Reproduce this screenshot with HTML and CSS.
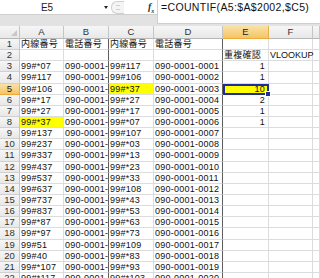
FILE: index.html
```html
<!DOCTYPE html>
<html lang="ja">
<head>
    <meta charset="UTF-8">
    <meta name="viewport" content="width=device-width, initial-scale=1.0">
    <title>重複確認</title>
    <link rel="stylesheet" href="styles.css">
</head>
<body>

<div class="topbar">
    <div class="left">
        <span class="name-box">E5</span>
        <span class="drop"></span>
        <span class="pill"><i></i></span>
        <span class="fx">f<sub>x</sub></span>
    </div>
    <div class="formula">=COUNTIF(A5:$A$2002,$C5)</div>
</div>

<!-- column B is too narrow, so only the start of each number shows -->
<div class="sheet">
    <div class="row">
        <div class="corner"><i></i></div>
        <div class="ch">A</div><div class="ch">B</div><div class="ch">C</div><div class="ch">D</div>
        <div class="ch sel">E</div><div class="ch">F</div><div class="ch"></div>
    </div>
    <div class="row">
        <div class="rh">1</div>
        <div class="c">内線番号</div><div class="c bd">電話番号</div><div class="c">内線番号</div><div class="c bd">電話番号</div>
        <div class="c"></div><div class="c"></div><div class="c"></div>
    </div>
    <div class="row">
        <div class="rh">2</div>
        <div class="c"></div><div class="c bd"></div><div class="c"></div><div class="c bd"></div>
        <div class="c">重複確認</div><div class="c spill">VLOOKUP</div><div class="c"></div>
    </div>
    <div class="row">
        <div class="rh">3</div>
        <div class="c">99#*07</div><div class="c bd">090-0001-</div><div class="c">99#117</div><div class="c bd">090-0001-0001</div>
        <div class="c num">1</div><div class="c"></div><div class="c"></div>
    </div>
    <div class="row">
        <div class="rh">4</div>
        <div class="c">99#117</div><div class="c bd">090-0001-</div><div class="c">99#106</div><div class="c bd">090-0001-0002</div>
        <div class="c num">1</div><div class="c"></div><div class="c"></div>
    </div>
    <div class="row">
        <div class="rh sel">5</div>
        <div class="c">99#106</div><div class="c bd">090-0001-</div><div class="c yellow">99#*37</div><div class="c bd">090-0001-0003</div>
        <div class="c num yellow active">10<span class="handle"></span></div><div class="c"></div><div class="c"></div>
    </div>
    <div class="row">
        <div class="rh">6</div>
        <div class="c">99#*17</div><div class="c bd">090-0001-</div><div class="c">99#*27</div><div class="c bd">090-0001-0004</div>
        <div class="c num">2</div><div class="c"></div><div class="c"></div>
    </div>
    <div class="row">
        <div class="rh">7</div>
        <div class="c">99#*27</div><div class="c bd">090-0001-</div><div class="c">99#*17</div><div class="c bd">090-0001-0005</div>
        <div class="c num">1</div><div class="c"></div><div class="c"></div>
    </div>
    <div class="row">
        <div class="rh">8</div>
        <div class="c yellow">99#*37</div><div class="c bd">090-0001-</div><div class="c">99#*07</div><div class="c bd">090-0001-0006</div>
        <div class="c num">1</div><div class="c"></div><div class="c"></div>
    </div>
    <div class="row">
        <div class="rh">9</div>
        <div class="c">99#137</div><div class="c bd">090-0001-</div><div class="c">99#107</div><div class="c bd">090-0001-0007</div>
        <div class="c"></div><div class="c"></div><div class="c"></div>
    </div>
    <div class="row">
        <div class="rh">10</div>
        <div class="c">99#237</div><div class="c bd">090-0001-</div><div class="c">99#*03</div><div class="c bd">090-0001-0008</div>
        <div class="c"></div><div class="c"></div><div class="c"></div>
    </div>
    <div class="row">
        <div class="rh">11</div>
        <div class="c">99#337</div><div class="c bd">090-0001-</div><div class="c">99#*13</div><div class="c bd">090-0001-0009</div>
        <div class="c"></div><div class="c"></div><div class="c"></div>
    </div>
    <div class="row">
        <div class="rh">12</div>
        <div class="c">99#437</div><div class="c bd">090-0001-</div><div class="c">99#*23</div><div class="c bd">090-0001-0010</div>
        <div class="c"></div><div class="c"></div><div class="c"></div>
    </div>
    <div class="row">
        <div class="rh">13</div>
        <div class="c">99#537</div><div class="c bd">090-0001-</div><div class="c">99#*33</div><div class="c bd">090-0001-0011</div>
        <div class="c"></div><div class="c"></div><div class="c"></div>
    </div>
    <div class="row">
        <div class="rh">14</div>
        <div class="c">99#637</div><div class="c bd">090-0001-</div><div class="c">99#108</div><div class="c bd">090-0001-0012</div>
        <div class="c"></div><div class="c"></div><div class="c"></div>
    </div>
    <div class="row">
        <div class="rh">15</div>
        <div class="c">99#737</div><div class="c bd">090-0001-</div><div class="c">99#*43</div><div class="c bd">090-0001-0013</div>
        <div class="c"></div><div class="c"></div><div class="c"></div>
    </div>
    <div class="row">
        <div class="rh">16</div>
        <div class="c">99#837</div><div class="c bd">090-0001-</div><div class="c">99#*53</div><div class="c bd">090-0001-0014</div>
        <div class="c"></div><div class="c"></div><div class="c"></div>
    </div>
    <div class="row">
        <div class="rh">17</div>
        <div class="c">99#*87</div><div class="c bd">090-0001-</div><div class="c">99#*63</div><div class="c bd">090-0001-0015</div>
        <div class="c"></div><div class="c"></div><div class="c"></div>
    </div>
    <div class="row">
        <div class="rh">18</div>
        <div class="c">99#*97</div><div class="c bd">090-0001-</div><div class="c">99#*73</div><div class="c bd">090-0001-0016</div>
        <div class="c"></div><div class="c"></div><div class="c"></div>
    </div>
    <div class="row">
        <div class="rh">19</div>
        <div class="c">99#51</div><div class="c bd">090-0001-</div><div class="c">99#109</div><div class="c bd">090-0001-0017</div>
        <div class="c"></div><div class="c"></div><div class="c"></div>
    </div>
    <div class="row">
        <div class="rh">20</div>
        <div class="c">99#40</div><div class="c bd">090-0001-</div><div class="c">99#*83</div><div class="c bd">090-0001-0018</div>
        <div class="c"></div><div class="c"></div><div class="c"></div>
    </div>
    <div class="row">
        <div class="rh">21</div>
        <div class="c">99#*107</div><div class="c bd">090-0001-</div><div class="c">99#*93</div><div class="c bd">090-0001-0019</div>
        <div class="c"></div><div class="c"></div><div class="c"></div>
    </div>
    <div class="row">
        <div class="rh">22</div>
        <div class="c">99#*117</div><div class="c bd">090-0001-</div><div class="c">99#*103</div><div class="c bd">090-0001-0020</div>
        <div class="c"></div><div class="c"></div><div class="c"></div>
    </div>
</div>

</body>
</html>
```

FILE: styles.css
```css
body {
    margin: 0;
    width: 320px;
    height: 278px;
    overflow: hidden;
    background-color: #fff;
    font-family: "Liberation Sans", "Noto Sans CJK JP", sans-serif;
    color: #000;
}

/* name box + formula bar */
.topbar {
    display: flex;
    height: 26px;
    background-color: #e2e2e2;
}
.left {
    width: 157px;
    height: 14px;
    background-color: #fff;
    border-bottom: 1px solid #cfcfcf;
    display: flex;
    align-items: center;
}
.name-box {
    width: 94px;
    text-align: center;
    font-size: 10px;
    color: #222;
}
.drop {
    margin-left: 10px;
    width: 0;
    height: 0;
    border-left: 2px solid transparent;
    border-right: 2px solid transparent;
    border-top: 3px solid #222;
}
.pill {
    margin-left: 3px;
    width: 12px;
    height: 11px;
    border: 1px solid #cfcfcf;
    border-right: none;
    border-radius: 6px 0 0 6px;
    background-color: #f4f4f4;
    display: flex;
    align-items: center;
    justify-content: center;
}
.pill i {
    width: 4px;
    height: 3px;
    border-top: 1px solid #d0d0d0;
    border-bottom: 1px solid #d0d0d0;
}
.fx {
    margin-left: 24px;
    font-family: "Liberation Serif", serif;
    font-style: italic;
    font-weight: bold;
    font-size: 10px;
    color: #333;
}
.fx sub {
    font-size: 6px;
}
.formula {
    flex: 1;
    height: 23px;
    background-color: #fff;
    border-left: 1px solid #cfcfcf;
    border-bottom: 1px solid #cfcfcf;
    padding-left: 3px;
    font-size: 10.5px;
    letter-spacing: 0.35px;
    line-height: 14px;
    color: #111;
}

/* worksheet grid */
.sheet {
    display: grid;
    grid-template-columns: 20px 44px 45px 45px 69px 46px 44px 7px;
    grid-template-rows: 13px repeat(22, 11.15px);
}
.row {
    display: contents;
}
.corner, .ch, .rh {
    background: linear-gradient(#f6f6f6, #e8e8e8);
    border-right: 1px solid #c5c5c5;
    border-bottom: 1px solid #b7b7b7;
    font-size: 9.5px;
    color: #333;
    text-align: center;
    overflow: hidden;
}
.corner {
    position: relative;
}
.corner i {
    position: absolute;
    right: 2px;
    bottom: 2px;
    border-left: 6px solid transparent;
    border-bottom: 6px solid #c8c8c8;
}
.ch {
    line-height: 12px;
}
.rh {
    line-height: 10px;
    border-bottom-color: #d0d0d0;
}
.ch.sel, .rh.sel {
    background: linear-gradient(#fae1a4, #f3c566);
    border-bottom-color: #f0a73c;
    border-right-color: #e3b04f;
    color: #222;
}
.c {
    border-right: 1px solid #dadcdd;
    border-bottom: 1px solid #dadcdd;
    padding: 0 1px;
    font-size: 9px;
    letter-spacing: 0.25px;
    line-height: 10px;
    white-space: nowrap;
    overflow: hidden;
    color: #111;
}
.c.bd {
    border-right-color: #5e5e5e;
}
.c.num {
    text-align: right;
    padding-right: 3px;
}
.c.spill {
    overflow: visible;
    letter-spacing: 0;
}
.yellow {
    background-color: #ffff00;
}
.active {
    position: relative;
    overflow: visible;
    outline: 2px solid #1f2d96;
    outline-offset: -2px;
}
.handle {
    position: absolute;
    right: -3px;
    bottom: -3px;
    width: 4px;
    height: 4px;
    background-color: #1f2d96;
    border: 1px solid #fff;
}
```
